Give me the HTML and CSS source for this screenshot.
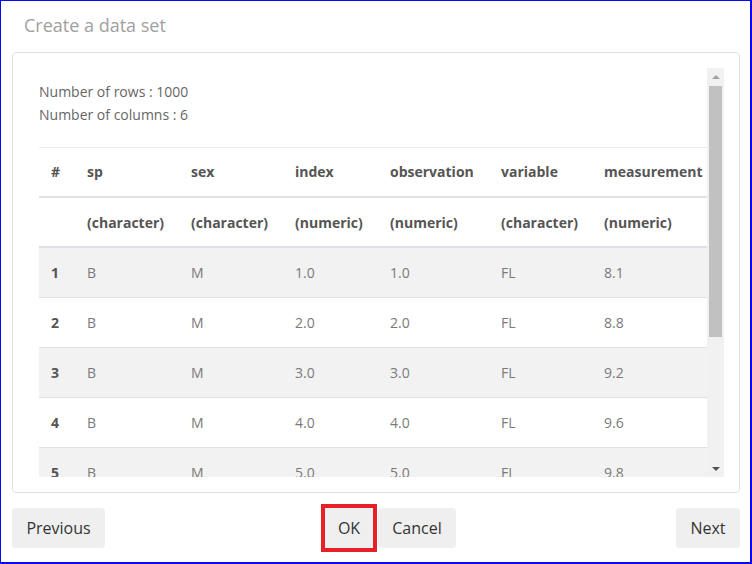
FILE: index.html
```html
<!DOCTYPE html>
<html>
<head>
<meta charset="utf-8">
<link rel="stylesheet" href="styles.css">
</head>
<body>
<div class="frame">
  <h1 class="title">Create a data set</h1>
  <div class="panel">
    <div class="scroller">
      <div class="content">
        <div class="info">
          <div>Number of rows : 1000</div>
          <div>Number of columns : 6</div>
        </div>
        <table class="grid">
          <colgroup>
            <col class="c-num"><col class="c-sp"><col class="c-sex"><col class="c-index"><col class="c-obs"><col class="c-var"><col class="c-meas">
          </colgroup>
          <thead>
            <tr class="head1"><th>#</th><th>sp</th><th>sex</th><th>index</th><th>observation</th><th>variable</th><th>measurement</th></tr>
            <tr class="head2"><th></th><th>(character)</th><th>(character)</th><th>(numeric)</th><th>(numeric)</th><th>(character)</th><th>(numeric)</th></tr>
          </thead>
          <tbody>
            <tr class="odd"><th>1</th><td>B</td><td>M</td><td>1.0</td><td>1.0</td><td>FL</td><td>8.1</td></tr>
            <tr><th>2</th><td>B</td><td>M</td><td>2.0</td><td>2.0</td><td>FL</td><td>8.8</td></tr>
            <tr class="odd"><th>3</th><td>B</td><td>M</td><td>3.0</td><td>3.0</td><td>FL</td><td>9.2</td></tr>
            <tr><th>4</th><td>B</td><td>M</td><td>4.0</td><td>4.0</td><td>FL</td><td>9.6</td></tr>
            <tr class="odd"><th>5</th><td>B</td><td>M</td><td>5.0</td><td>5.0</td><td>FL</td><td>9.8</td></tr>
          </tbody>
        </table>
      </div>
      <div class="scrollbar">
        <div class="arrow up"></div>
        <div class="thumb"></div>
        <div class="track-rest"></div>
        <div class="arrow down"></div>
      </div>
    </div>
  </div>
  <div class="footer">
    <button class="btn btn-prev">Previous</button>
    <div class="center">
      <button class="btn btn-ok">OK</button>
      <button class="btn btn-cancel">Cancel</button>
    </div>
    <button class="btn btn-next">Next</button>
  </div>
</div>
</body>
</html>
```

FILE: styles.css
```css
html, body {
  margin: 0;
  padding: 0;
  background: #ffffff;
}
body {
  font-family: "Open Sans", "Noto Sans", sans-serif;
}
.frame {
  width: 752px;
  height: 564px;
  box-sizing: border-box;
  border-style: solid;
  border-color: #0a0af0;
  border-width: 1px 2px 2px 1px;
  padding: 11px 10px 0 11px;
  display: flex;
  flex-direction: column;
}
.title {
  margin: 0 0 14px 12px;
  font-size: 18px;
  line-height: 26px;
  font-weight: 400;
  color: #a0a0a0;
}
.panel {
  height: 441px;
  box-sizing: border-box;
  border: 1px solid #dcdfe3;
  border-radius: 4px;
  padding: 15px;
}
.scroller {
  height: 409px;
  display: flex;
}
.content {
  flex: 1;
  overflow: hidden;
  padding: 12px 0 0 11px;
}
.info {
  font-size: 14px;
  line-height: 23px;
  color: #666666;
  margin-bottom: 21px;
}
.grid {
  width: 668px;
  table-layout: fixed;
  border-collapse: separate;
  border-spacing: 0;
  font-size: 14px;
  line-height: 22px;
}
.c-num { width: 36px; }
.c-sp { width: 104px; }
.c-sex { width: 104px; }
.c-index { width: 95px; }
.c-obs { width: 111px; }
.c-var { width: 103px; }
.c-meas { width: 115px; }
.grid th, .grid td {
  text-align: left;
  padding: 14px 0 13px 12px;
  white-space: nowrap;
  border-bottom: 1px solid #dee2e6;
}
.grid th {
  font-weight: 700;
  color: #555555;
}
.grid td {
  color: #7a7a7a;
}
.head1 th {
  border-top: 1px solid #e9ecef;
  border-bottom: 2px solid #dee2e6;
  padding: 13px 0 13px 12px;
}
.head2 th {
  border-bottom: 2px solid #dee2e6;
  padding: 14px 0 12px 12px;
}
.odd th, .odd td {
  background: #f2f2f2;
}
.scrollbar {
  width: 17px;
  background: #f1f1f1;
  display: flex;
  flex-direction: column;
}
.arrow {
  height: 17px;
  display: flex;
  align-items: center;
  justify-content: center;
}
.arrow::before {
  content: "";
  width: 0;
  height: 0;
  border-left: 4px solid transparent;
  border-right: 4px solid transparent;
}
.up::before {
  border-bottom: 4px solid #a3a3a3;
}
.down::before {
  border-top: 4px solid #505050;
}
.thumb {
  height: 251px;
  margin: 1px 2px 0 2px;
  background: #c1c1c1;
}
.track-rest {
  flex: 1;
}
.footer {
  margin-top: 15px;
  display: flex;
  justify-content: space-between;
  align-items: center;
}
.center {
  display: flex;
  gap: 5px;
}
.btn {
  height: 40px;
  padding: 0;
  border: none;
  border-radius: 4px;
  background: #efefef;
  color: #333333;
  font-family: "Open Sans", "Noto Sans", sans-serif;
  font-size: 16px;
  text-align: center;
}
.btn-prev { width: 93px; }
.btn-ok {
  width: 48px;
  border-radius: 0;
  outline: 4px solid #e8202a;
}
.btn-cancel { width: 78px; }
.btn-next { width: 64px; }
```
